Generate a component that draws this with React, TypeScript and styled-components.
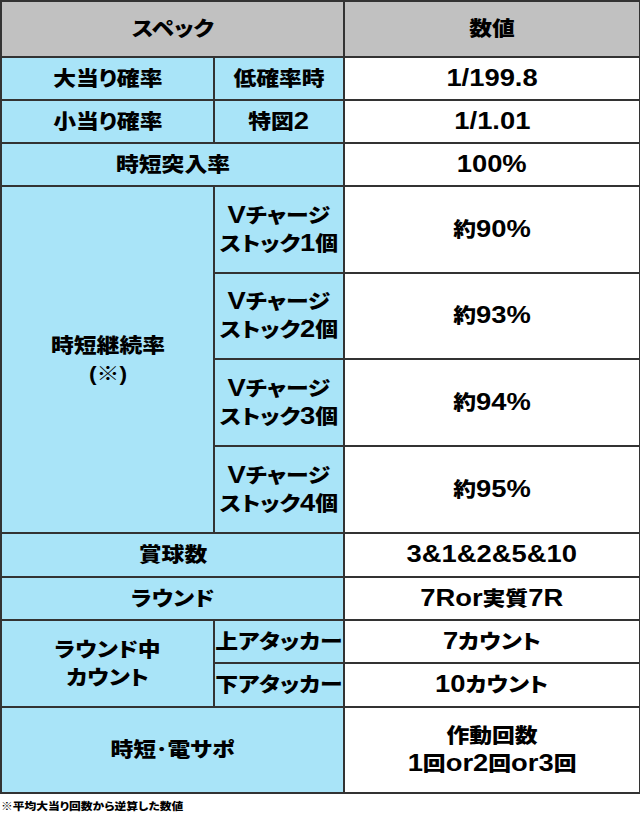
import React from "react"
import styled, { createGlobalStyle } from "styled-components"

const GlobalStyle = createGlobalStyle`
    body {
        margin: 0;
        background: #ffffff;
        font-family: "Liberation Sans", "Noto Sans CJK JP", sans-serif;
        color: #000000;
    }
`

const Page = styled.div`
    width: 640px;
`

const SpecTable = styled.table`
    width: 639px;
    border-collapse: collapse;
    table-layout: fixed;
    border: 2px solid #333333;
    border-top-color: #8a8a8a;
`

const Row = styled.tr<{ $h: number }>`
    height: ${(p) => p.$h}px;
`

const Cell = styled.td<{ $kind: "head" | "label" | "value" }>`
    border: 2px solid #333333;
    padding: 0;
    text-align: center;
    vertical-align: middle;
    font-weight: 900;
    font-size: 20px;
    line-height: 28px;
    font-feature-settings: "palt";
    background: ${(p) =>
        p.$kind === "head" ? "#c1c1c1" : p.$kind === "label" ? "#a9e4f8" : "#ffffff"};
`

const Stretch = styled.span<{ $origin?: string; $scale?: number }>`
    display: inline-block;
    transform: scaleX(${(p) => p.$scale ?? 1.14});
    transform-origin: ${(p) => p.$origin || "center"};
    white-space: nowrap;
`

// latin letters and digits are drawn bigger than the kana in the reference
const Num = styled.span`
    font-size: 1.2em;
    font-weight: 700;
    line-height: 0;
`

const Note = styled.div`
    font-size: 10.5px;
    font-weight: 900;
    font-feature-settings: "palt";
    padding: 5px 0 0 1px;
    line-height: 14px;
`

function split(text: string) {
    return text.split(/([0-9A-Za-z%&/.]+)/).map((part, i) =>
        /^[0-9A-Za-z%&/.]+$/.test(part) ? <Num key={i}>{part}</Num> : part
    )
}

const T = ({ lines }: { lines: string[] }) => (
    <Stretch>
        {lines.map((l, i) => (
            <React.Fragment key={i}>
                {i > 0 && <br />}
                {split(l)}
            </React.Fragment>
        ))}
    </Stretch>
)

const vRows = [
    { n: "1", v: "約90%", h: 87 },
    { n: "2", v: "約93%", h: 86 },
    { n: "3", v: "約94%", h: 87 },
    { n: "4", v: "約95%", h: 87 },
]

export default function App() {
    return (
        <Page>
            <GlobalStyle />
            <SpecTable>
                <colgroup>
                    <col style={{ width: 213 }} />
                    <col style={{ width: 130 }} />
                    <col style={{ width: 296 }} />
                </colgroup>
                <tbody>
                    <Row $h={56}>
                        <Cell $kind="head" colSpan={2}><T lines={["スペック"]} /></Cell>
                        <Cell $kind="head"><T lines={["数値"]} /></Cell>
                    </Row>
                    <Row $h={43}>
                        <Cell $kind="label"><T lines={["大当り確率"]} /></Cell>
                        <Cell $kind="label"><T lines={["低確率時"]} /></Cell>
                        <Cell $kind="value"><T lines={["1/199.8"]} /></Cell>
                    </Row>
                    <Row $h={43}>
                        <Cell $kind="label"><T lines={["小当り確率"]} /></Cell>
                        <Cell $kind="label"><T lines={["特図2"]} /></Cell>
                        <Cell $kind="value"><T lines={["1/1.01"]} /></Cell>
                    </Row>
                    <Row $h={43}>
                        <Cell $kind="label" colSpan={2}><T lines={["時短突入率"]} /></Cell>
                        <Cell $kind="value"><T lines={["100%"]} /></Cell>
                    </Row>
                    {vRows.map((r, i) => (
                        <Row $h={r.h} key={r.n}>
                            {i === 0 && (
                                <Cell $kind="label" rowSpan={4}>
                                    <T lines={["時短継続率", "(※)"]} />
                                </Cell>
                            )}
                            <Cell $kind="label">
                                <T lines={["Vチャージ", `ストック${r.n}個`]} />
                            </Cell>
                            <Cell $kind="value"><T lines={[r.v]} /></Cell>
                        </Row>
                    ))}
                    <Row $h={44}>
                        <Cell $kind="label" colSpan={2}><T lines={["賞球数"]} /></Cell>
                        <Cell $kind="value"><T lines={["3&1&2&5&10"]} /></Cell>
                    </Row>
                    <Row $h={43}>
                        <Cell $kind="label" colSpan={2}><T lines={["ラウンド"]} /></Cell>
                        <Cell $kind="value"><T lines={["7Ror実質7R"]} /></Cell>
                    </Row>
                    <Row $h={43}>
                        <Cell $kind="label" rowSpan={2}><T lines={["ラウンド中", "カウント"]} /></Cell>
                        <Cell $kind="label"><T lines={["上アタッカー"]} /></Cell>
                        <Cell $kind="value"><T lines={["7カウント"]} /></Cell>
                    </Row>
                    <Row $h={44}>
                        <Cell $kind="label"><T lines={["下アタッカー"]} /></Cell>
                        <Cell $kind="value"><T lines={["10カウント"]} /></Cell>
                    </Row>
                    <Row $h={86}>
                        <Cell $kind="label" colSpan={2}><T lines={["時短･電サポ"]} /></Cell>
                        <Cell $kind="value"><T lines={["作動回数", "1回or2回or3回"]} /></Cell>
                    </Row>
                </tbody>
            </SpecTable>
            <Note>
                <Stretch $origin="left" $scale={1.12}>※平均大当り回数から逆算した数値</Stretch>
            </Note>
        </Page>
    )
}
